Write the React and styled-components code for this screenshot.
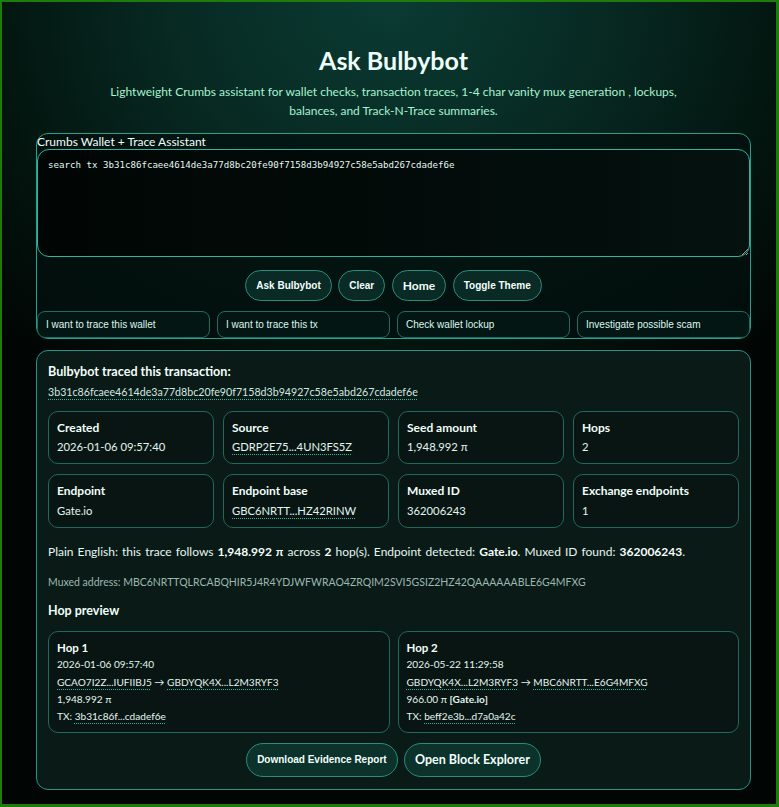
import React from "react";
import styled, { createGlobalStyle } from "styled-components";

const GlobalStyle = createGlobalStyle`
  html, body { margin: 0; padding: 0; background: #010504; }
  body { font-family: Lato, "Noto Sans", sans-serif; color: #e4f7f1; }
  * { box-sizing: border-box; }
`;

const Frame = styled.div`
  width: 779px;
  height: 807px;
  border-style: solid;
  border-color: #1d7c0c;
  border-width: 2px 3px 3px 2px;
  background-color: #010504;
  background-image: radial-gradient(
    ellipse 72% 58% at 50% 0%,
    #0a3b33 0%,
    #072922 40%,
    #03150f 72%,
    #010504 100%
  );
  overflow: hidden;
`;

const Page = styled.main`
  width: 715px;
  margin-left: 34px;
  padding-top: 41.6px;
`;

const Title = styled.h1`
  margin: 0;
  font-size: 25px;
  line-height: 32px;
  font-weight: 700;
  text-align: center;
  color: #eefff9;
`;

const Subtitle = styled.p`
  margin: 6px auto 0;
  max-width: 600px;
  font-size: 12px;
  line-height: 19px;
  text-align: center;
  color: #a7f3d0;
`;

const FormCard = styled.form`
  margin-top: 13px;
  border: 1px solid #2a9d8c;
  border-radius: 12px;
  background: rgba(3, 16, 13, 0.75);
`;

const FieldLabel = styled.label`
  display: block;
  font-size: 12px;
  line-height: 15.6px;
  color: #f2fffb;
`;

const Prompt = styled.textarea`
  display: block;
  width: 100%;
  height: 108px;
  margin: 0;
  padding: 10px;
  border: 1px solid #2cb6a2;
  border-radius: 12px;
  background: linear-gradient(90deg, #010604 0%, #030d0b 70%, #05120f 100%);
  color: #e3f7f1;
  font-family: "DejaVu Sans Mono", "Liberation Mono", monospace;
  font-size: 9.15px;
  resize: vertical;
  outline: none;
`;

const ButtonRow = styled.div`
  display: flex;
  justify-content: center;
  gap: ${(p) => p.$gap || 6.5}px;
  margin-top: ${(p) => p.$top || 12.6}px;
`;

const PillButton = styled.button`
  height: ${(p) => (p.$tall ? 34.4 : 31.4)}px;
  padding: 0 10px;
  border: 1px solid #2a8c7b;
  border-radius: 999px;
  background: ${(p) => (p.$tall ? "#0c322c" : "#0a2a25")};
  color: #f1fffa;
  font-family: ${(p) => (p.$size ? 'Lato, "Noto Sans", sans-serif' : '"Liberation Sans", Arial, sans-serif')};
  font-size: ${(p) => p.$size || 10}px;
  font-weight: 700;
  cursor: pointer;
`;

const ChipRow = styled.div`
  display: grid;
  grid-template-columns: repeat(4, 1fr);
  gap: 7px;
  margin-top: 9.6px;
`;

const Chip = styled.button`
  height: 27px;
  padding: 0 8px;
  border: 1px solid #1d6e61;
  border-radius: 8px;
  background: #041613;
  color: #dcf7f0;
  font-family: "Liberation Sans", Arial, sans-serif;
  font-size: 10px;
  text-align: left;
  cursor: pointer;
`;

const ResultCard = styled.section`
  margin-top: 11px;
  padding: 12px 11px;
  border: 1px solid #2a9382;
  border-radius: 12px;
  background: #0a1a16;
`;

const ResultTitle = styled.p`
  margin: 0;
  font-size: 12.6px;
  line-height: 17px;
  font-weight: 700;
  color: #f3fffb;
`;

const Link = styled.a`
  color: inherit;
  text-decoration: underline dotted #3bb39d;
  text-decoration-thickness: 1px;
  text-underline-offset: 3px;
`;

const HashLine = styled.div`
  margin-top: 3px;
  font-size: 10.65px;
  line-height: 18px;
  color: #cfe9e2;
`;

const StatGrid = styled.div`
  display: grid;
  grid-template-columns: repeat(4, 1fr);
  gap: 10px 9px;
  margin-top: 10px;
`;

const Tile = styled.div`
  padding: ${(p) => p.$pad || "7px 8px"};
  border: 1px solid #1e6a5c;
  border-radius: 10px;
  background: rgba(0, 0, 0, 0.18);
`;

const StatLabel = styled.div`
  font-size: 12px;
  line-height: 18px;
  font-weight: 700;
  color: #f0fffa;
  margin-bottom: 1.6px;
`;

const StatValue = styled.div`
  font-size: 11.25px;
  line-height: 18px;
  color: #e2f6f0;
`;

const Summary = styled.p`
  margin: 14.8px 0 0;
  font-size: 12px;
  line-height: 18px;
  word-spacing: 1px;
  color: #e4f7f1;
  b { color: #f5fffc; }
`;

const MutedLine = styled.p`
  margin: 13.6px 0 0;
  font-size: 10.5px;
  line-height: 16px;
  color: #9db8b1;
`;

const SectionTitle = styled.h3`
  margin: 11.7px 0 0;
  font-size: 12.5px;
  line-height: 18px;
  font-weight: 700;
  color: #f0fffa;
`;

const HopGrid = styled.div`
  display: grid;
  grid-template-columns: 1fr 1fr;
  gap: 8px;
  margin-top: 10.7px;
`;

const HopLine = styled.div`
  font-size: ${(p) => (p.$head ? 11.5 : 10.1)}px;
  line-height: 17.4px;
  font-weight: ${(p) => (p.$head ? 700 : 400)};
  color: ${(p) => (p.$head ? "#f3fffb" : "#e2f6f0")};
`;

const stats = [
  { label: "Created", value: "2026-01-06 09:57:40" },
  { label: "Source", value: "GDRP2E75...4UN3FS5Z", link: true },
  { label: "Seed amount", value: "1,948.992 π" },
  { label: "Hops", value: "2" },
  { label: "Endpoint", value: "Gate.io" },
  { label: "Endpoint base", value: "GBC6NRTT...HZ42RINW", link: true },
  { label: "Muxed ID", value: "362006243" },
  { label: "Exchange endpoints", value: "1" },
];

const hops = [
  {
    title: "Hop 1",
    time: "2026-01-06 09:57:40",
    from: "GCAO7I2Z...IUFIIBJ5",
    to: "GBDYQK4X...L2M3RYF3",
    amount: "1,948.992 π",
    tag: null,
    tx: "3b31c86f...cdadef6e",
  },
  {
    title: "Hop 2",
    time: "2026-05-22 11:29:58",
    from: "GBDYQK4X...L2M3RYF3",
    to: "MBC6NRTT...E6G4MFXG",
    amount: "966.00 π",
    tag: "[Gate.io]",
    tx: "beff2e3b...d7a0a42c",
  },
];

const chips = [
  "I want to trace this wallet",
  "I want to trace this tx",
  "Check wallet lockup",
  "Investigate possible scam",
];

export default function App() {
  return (
    <>
      <GlobalStyle />
      <Frame>
        <Page>
          <Title>Ask Bulbybot</Title>
          <Subtitle>
            Lightweight Crumbs assistant for wallet checks, transaction traces, 1-4 char vanity mux
            generation , lockups, balances, and Track-N-Trace summaries.
          </Subtitle>

          <FormCard onSubmit={(e) => e.preventDefault()}>
            <FieldLabel htmlFor="prompt">Crumbs Wallet + Trace Assistant</FieldLabel>
            <Prompt
              id="prompt"
              defaultValue="search tx 3b31c86fcaee4614de3a77d8bc20fe90f7158d3b94927c58e5abd267cdadef6e"
            />
            <ButtonRow>
              <PillButton type="submit">Ask Bulbybot</PillButton>
              <PillButton type="button">Clear</PillButton>
              <PillButton type="button" $size={12}>Home</PillButton>
              <PillButton type="button">Toggle Theme</PillButton>
            </ButtonRow>
            <ChipRow>
              {chips.map((c) => (
                <Chip type="button" key={c}>{c}</Chip>
              ))}
            </ChipRow>
          </FormCard>

          <ResultCard>
            <ResultTitle>Bulbybot traced this transaction:</ResultTitle>
            <HashLine>
              <Link href="#">3b31c86fcaee4614de3a77d8bc20fe90f7158d3b94927c58e5abd267cdadef6e</Link>
            </HashLine>

            <StatGrid>
              {stats.map((s) => (
                <Tile key={s.label}>
                  <StatLabel>{s.label}</StatLabel>
                  <StatValue>{s.link ? <Link href="#">{s.value}</Link> : s.value}</StatValue>
                </Tile>
              ))}
            </StatGrid>

            <Summary>
              Plain English: this trace follows <b>1,948.992 π</b> across <b>2</b> hop(s). Endpoint
              detected: <b>Gate.io</b>. Muxed ID found: <b>362006243</b>.
            </Summary>
            <MutedLine>
              Muxed address: MBC6NRTTQLRCABQHIR5J4R4YDJWFWRAO4ZRQIM2SVI5GSIZ2HZ42QAAAAAABLE6G4MFXG
            </MutedLine>

            <SectionTitle>Hop preview</SectionTitle>
            <HopGrid>
              {hops.map((h) => (
                <Tile key={h.title} $pad="7px 8px 6px">
                  <HopLine $head>{h.title}</HopLine>
                  <HopLine>{h.time}</HopLine>
                  <HopLine>
                    <Link href="#">{h.from}</Link> → <Link href="#">{h.to}</Link>
                  </HopLine>
                  <HopLine>
                    {h.amount}
                    {h.tag && <b> {h.tag}</b>}
                  </HopLine>
                  <HopLine>
                    TX: <Link href="#">{h.tx}</Link>
                  </HopLine>
                </Tile>
              ))}
            </HopGrid>

            <ButtonRow $top={10} $gap={6.3}>
              <PillButton type="button" $tall>Download Evidence Report</PillButton>
              <PillButton type="button" $tall $size={12.5}>Open Block Explorer</PillButton>
            </ButtonRow>
          </ResultCard>
        </Page>
      </Frame>
    </>
  );
}
